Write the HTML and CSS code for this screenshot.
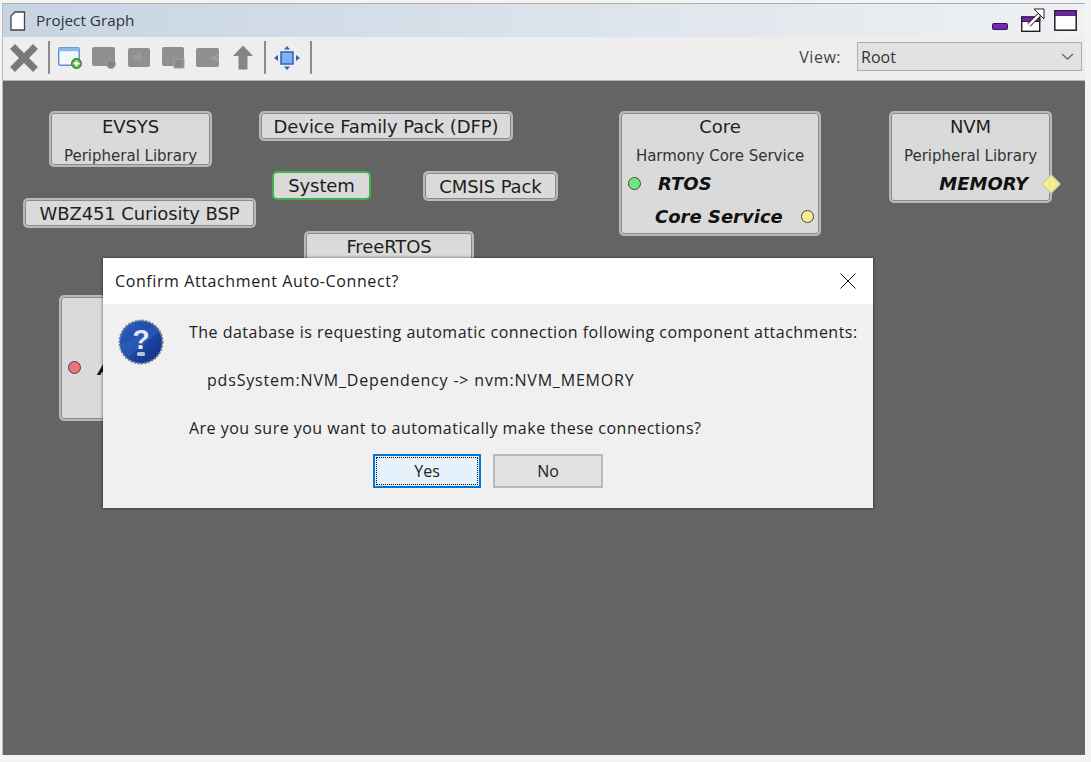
FILE: index.html
```html
<!DOCTYPE html>
<html lang="en">
<head>
<meta charset="utf-8">
<title>Project Graph</title>
<link rel="stylesheet" href="styles.css">
</head>
<body>
<div class="window">
  <header class="titlebar">
    <svg class="doc-icon" width="16" height="20" viewBox="0 0 16 20"><path d="M5 1H14.500V19H1V5Z" fill="#fff" stroke="#444" stroke-width="1.300"/></svg>
    <span class="title">Project Graph</span>
    <div class="win-controls">
      <svg class="wc-min" width="16" height="7" viewBox="0 0 16 7"><rect x="0.500" y="0.500" width="15" height="6" rx="1" fill="#7a1fc0" stroke="#2c1a3c"/></svg>
      <svg class="wc-restore" width="24" height="24" viewBox="0 0 24 24"><rect x="0.700" y="9" width="18" height="14.300" fill="#fff" stroke="#222" stroke-width="1.400"/><rect x="0.700" y="9" width="18" height="4.500" fill="#7a1fc0" stroke="#222"/><path d="M8 17L18 7" stroke="#222" stroke-width="4.500"/><path d="M8 17L18 7" stroke="#fff" stroke-width="2.500"/><path d="M13 1H23V11Z" fill="#fff" stroke="#222"/></svg>
      <svg class="wc-max" width="23" height="21" viewBox="0 0 23 21"><rect x="0.800" y="0.800" width="21.400" height="19.400" fill="#fff" stroke="#222" stroke-width="1.500"/><rect x="0.800" y="0.800" width="21.400" height="4.500" fill="#7a1fc0" stroke="#222"/></svg>
    </div>
  </header>
  <div class="toolbar">
    <svg width="28" height="28" viewBox="0 0 28 28"><path d="M5 5L23 23M23 5L5 23" stroke="#7a7a7a" stroke-width="7" stroke-linecap="square"/></svg>
    <span class="sep"></span>
    <svg width="24" height="22" viewBox="0 0 24 22"><rect x="0.700" y="0.700" width="20.500" height="17.500" rx="1.500" fill="#f4f8fd" stroke="#5a8fd0" stroke-width="1.400"/><rect x="0.700" y="0.700" width="20.500" height="3.500" fill="#8ab8ea"/><circle cx="18.500" cy="16.500" r="5" fill="#58b043" stroke="#2f7a28"/><path d="M18.500 13.500V19.500M15.500 16.500H21.500" stroke="#fff" stroke-width="1.800"/></svg>
    <svg width="25" height="22" viewBox="0 0 25 22"><rect x="0" y="0" width="23" height="19" rx="2" fill="#8f8f8f"/><circle cx="19" cy="17" r="4.500" fill="#848484" stroke="#a4a4a4"/></svg>
    <svg width="24" height="20" viewBox="0 0 24 20"><rect x="1" y="0" width="22" height="19" rx="2" fill="#8f8f8f"/><path d="M6 7H11V3L16 9.500L11 16V12H6Z" fill="#9b9b9b"/></svg>
    <svg width="24" height="22" viewBox="0 0 24 22"><rect x="1" y="0" width="22" height="19" rx="2" fill="#8f8f8f"/><rect x="13" y="12" width="10" height="9" fill="#8a8a8a" stroke="#a4a4a4"/></svg>
    <svg width="27" height="20" viewBox="0 0 27 20"><rect x="1" y="0" width="23" height="19" rx="2" fill="#8f8f8f"/><path d="M24 6L16 10L24 14" fill="#999" stroke="#a8a8a8"/></svg>
    <svg width="22" height="25" viewBox="0 0 22 25"><path d="M11 0.500L21 11H15.500V24.500H6.500V11H1Z" fill="#858585"/></svg>
    <span class="sep"></span>
    <svg width="26" height="24" viewBox="0 0 26 24"><rect x="7" y="6" width="12" height="12" fill="#7fb2f0" stroke="#2f62b8" stroke-width="1.500"/><path d="M13 0L16 3.500H10ZM13 24L16 20.500H10ZM0 12L4 9V15ZM26 12L22 9V15Z" fill="#2f62b8"/></svg>
    <span class="sep"></span>
    <div class="view">
      <span class="view-label">View:</span>
      <div class="select"><span>Root</span>
        <svg width="13" height="7" viewBox="0 0 13 7"><path d="M1 1L6.500 6L12 1" fill="none" stroke="#666" stroke-width="1.300"/></svg>
      </div>
    </div>
  </div>
  <main class="canvas">
    <div class="node evsys"><b class="name">EVSYS</b><small class="sub">Peripheral Library</small></div>
    <div class="node dfp"><b class="name">Device Family Pack (DFP)</b></div>
    <div class="node system"><b class="name">System</b></div>
    <div class="node cmsis"><b class="name">CMSIS Pack</b></div>
    <div class="node bsp"><b class="name">WBZ451 Curiosity BSP</b></div>
    <div class="node freertos"><b class="name">FreeRTOS</b></div>
    <div class="node core"><b class="name">Core</b><small class="sub">Harmony Core Service</small>
      <i class="port rtos">RTOS</i><i class="port service">Core Service</i>
      <span class="dot green"></span><span class="dot yellow"></span>
    </div>
    <div class="node nvm"><b class="name">NVM</b><small class="sub">Peripheral Library</small>
      <i class="port memory">MEMORY</i><span class="diamond"></span>
    </div>
    <div class="node hidden-node"><span class="dot red"></span><i class="port clipped">A</i></div>
  </main>
</div>
<section class="dialog">
  <header class="dlg-title">
    <span>Confirm Attachment Auto-Connect?</span>
    <svg width="16" height="16" viewBox="0 0 16 16"><path d="M0.500 0.500L15.500 15.500M15.500 0.500L0.500 15.500" stroke="#111" stroke-width="1"/></svg>
  </header>
  <div class="dlg-body">
    <svg class="help" width="46" height="46" viewBox="0 0 46 46">
      <defs><linearGradient id="g" x1="0" y1="0" x2="1" y2="1"><stop offset="0" stop-color="#2f62c8"/><stop offset="1" stop-color="#0e2f80"/></linearGradient></defs>
      <circle cx="23" cy="23" r="21.500" fill="url(#g)" stroke="#6d7a8c" stroke-width="2" stroke-dasharray="2 1.500"/>
      <path d="M3 27L36 6L41 13L10 38Z" fill="#3a6dd0" opacity=".35"/>
      <text x="23" y="30" text-anchor="middle" class="help-mark">?</text>
      <rect x="19" y="33" width="8" height="4" rx="1.500" fill="#b8c4dc"/>
    </svg>
    <div class="dlg-text">
      <p>The database is requesting automatic connection following component attachments:</p>
      <p class="indent">pdsSystem:NVM_Dependency -&gt; nvm:NVM_MEMORY</p>
      <p>Are you sure you want to automatically make these connections?</p>
    </div>
  </div>
  <div class="dlg-buttons">
    <button class="btn primary"><span>Yes</span></button>
    <button class="btn">No</button>
  </div>
</section>
</body>
</html>
```
FILE: styles.css
```css
* { box-sizing: border-box; }
html, body { margin: 0; height: 762px; overflow: hidden; background: #f4f4f4; }
body { font-family: "Open Sans", "Noto Sans", sans-serif; color: #222; padding: 3px 6px 7px 2px; }

.window { height: 752px; display: flex; flex-direction: column; border-top: 1px solid #aaa; border-left: 1px solid #bbb; }
.titlebar { height: 33px; flex: none; display: flex; align-items: center; padding: 0 8px 0 7px; background: linear-gradient(90deg, #c6d4e2, #eff1f3); }
.doc-icon { margin-right: 10px; }
.title { font-size: 15.300px; color: #333; margin-bottom: 2px; }
.win-controls { margin-left: auto; align-self: flex-end; display: flex; align-items: flex-end; gap: 9px; padding-bottom: 5px; }
.wc-min { margin: 0 4px 2px 0; }
.wc-max { margin-bottom: 1px; }
.toolbar { height: 44px; flex: none; display: flex; align-items: center; padding: 0 3px 2px 7px; background: #eeeeee; gap: 10px; border-bottom: 1px solid #b5b5b5; }
.toolbar svg { flex: none; }
.sep { width: 2px; height: 33px; background: #8c8c8c; flex: none; margin-right: -2px; }
.view { margin-left: auto; display: flex; align-items: center; gap: 16px; margin-bottom: 2px; }
.view-label { font-size: 16px; letter-spacing: .5px; color: #444; }
.select { width: 225px; height: 29px; display: flex; align-items: center; justify-content: space-between; padding: 0 7px 0 3px; background: #e2e2e2; border: 1px solid #adadad; font-size: 16px; color: #333; }

.canvas { flex: 1; position: relative; background: #646464; overflow: hidden; }
.node { position: absolute; background: #dadada; border: 2px solid #b9b9b9; border-radius: 5px; box-shadow: inset 0 0 0 1px #8a8a8a; display: flex; flex-direction: column; align-items: center; font-family: "DejaVu Sans", sans-serif; color: #1e1e1e; }
.name { font-weight: 400; font-size: 18px; line-height: 24px; padding-top: 2px; white-space: nowrap; letter-spacing: -0.100px; }
.sub { font-size: 15px; line-height: 18px; margin-top: 8px; white-space: nowrap; color: #333; }
.evsys { left: 46px; top: 30px; width: 163px; height: 56px; }
.dfp { left: 256px; top: 30px; width: 254px; height: 30px; }
.system { left: 269px; top: 90px; width: 99px; height: 29px; border-color: #3fb24a; box-shadow: none; }
.system .name { padding-top: 1px; }
.cmsis { left: 420px; top: 90px; width: 135px; height: 30px; }
.bsp { left: 20px; top: 117px; width: 233px; height: 30px; }
.freertos { left: 301px; top: 150px; width: 170px; height: 60px; }
.core { left: 616px; top: 30px; width: 202px; height: 125px; }
.nvm { left: 886px; top: 30px; width: 163px; height: 92px; }
.hidden-node { left: 56px; top: 214px; width: 120px; height: 126px; }
.port { position: absolute; font-family: "DejaVu Sans", sans-serif; font-weight: 700; font-style: italic; font-size: 18px; line-height: 24px; color: #111; white-space: nowrap; }
.rtos { left: 37px; top: 59px; }
.service { left: 34px; top: 92px; }
.memory { right: 22px; top: 59px; }
.clipped { left: 37px; top: 60px; }
.dot { position: absolute; width: 13px; height: 13px; border-radius: 50%; border: 1px solid #444; }
.green { left: 7px; top: 64px; background: #6fe87c; }
.yellow { right: 5px; top: 97px; background: #f5ec8e; }
.red { left: 7px; top: 64px; background: #f0707c; }
.diamond { position: absolute; right: -8px; top: 64px; width: 14px; height: 14px; transform: rotate(45deg); background: #f6ef92; border: 1px solid #bbb; }

.dialog { position: absolute; left: 103px; top: 258px; width: 770px; height: 250px; background: #f0f0f0; box-shadow: 0 0 3px rgba(0,0,0,.6); display: flex; flex-direction: column; }
.dlg-title { height: 46px; flex: none; background: #fff; display: flex; align-items: center; justify-content: space-between; padding: 0 17px 0 12px; font-size: 16px; letter-spacing: .6px; color: #1a1a1a; }
.dlg-body { display: flex; padding: 16px 0 0 15px; }
.help { flex: none; margin-top: -1px; }
.help-mark { font-family: "Liberation Sans", sans-serif; font-weight: 700; font-size: 28px; letter-spacing: 0; fill: #e4eaf6; }
.dlg-text { margin-left: 25px; font-size: 16px; letter-spacing: .48px; line-height: 24px; color: #222; white-space: nowrap; }
.dlg-text p { margin: 0 0 24px; }
.dlg-text .indent { padding-left: 18px; letter-spacing: .82px; }
.dlg-buttons { display: flex; justify-content: center; gap: 12px; margin-top: -10px; }
.btn { width: 110px; height: 34px; background: #e1e1e1; border: 2px solid #b9b9b9; font: inherit; font-size: 16px; color: #222; padding: 0; }
.btn.primary { width: 108px; background: #e5f1fb; border-color: #0078d7; padding: 1px; }
.btn.primary span { display: block; height: 100%; line-height: 26px; border: 1px dotted #111; }
```
